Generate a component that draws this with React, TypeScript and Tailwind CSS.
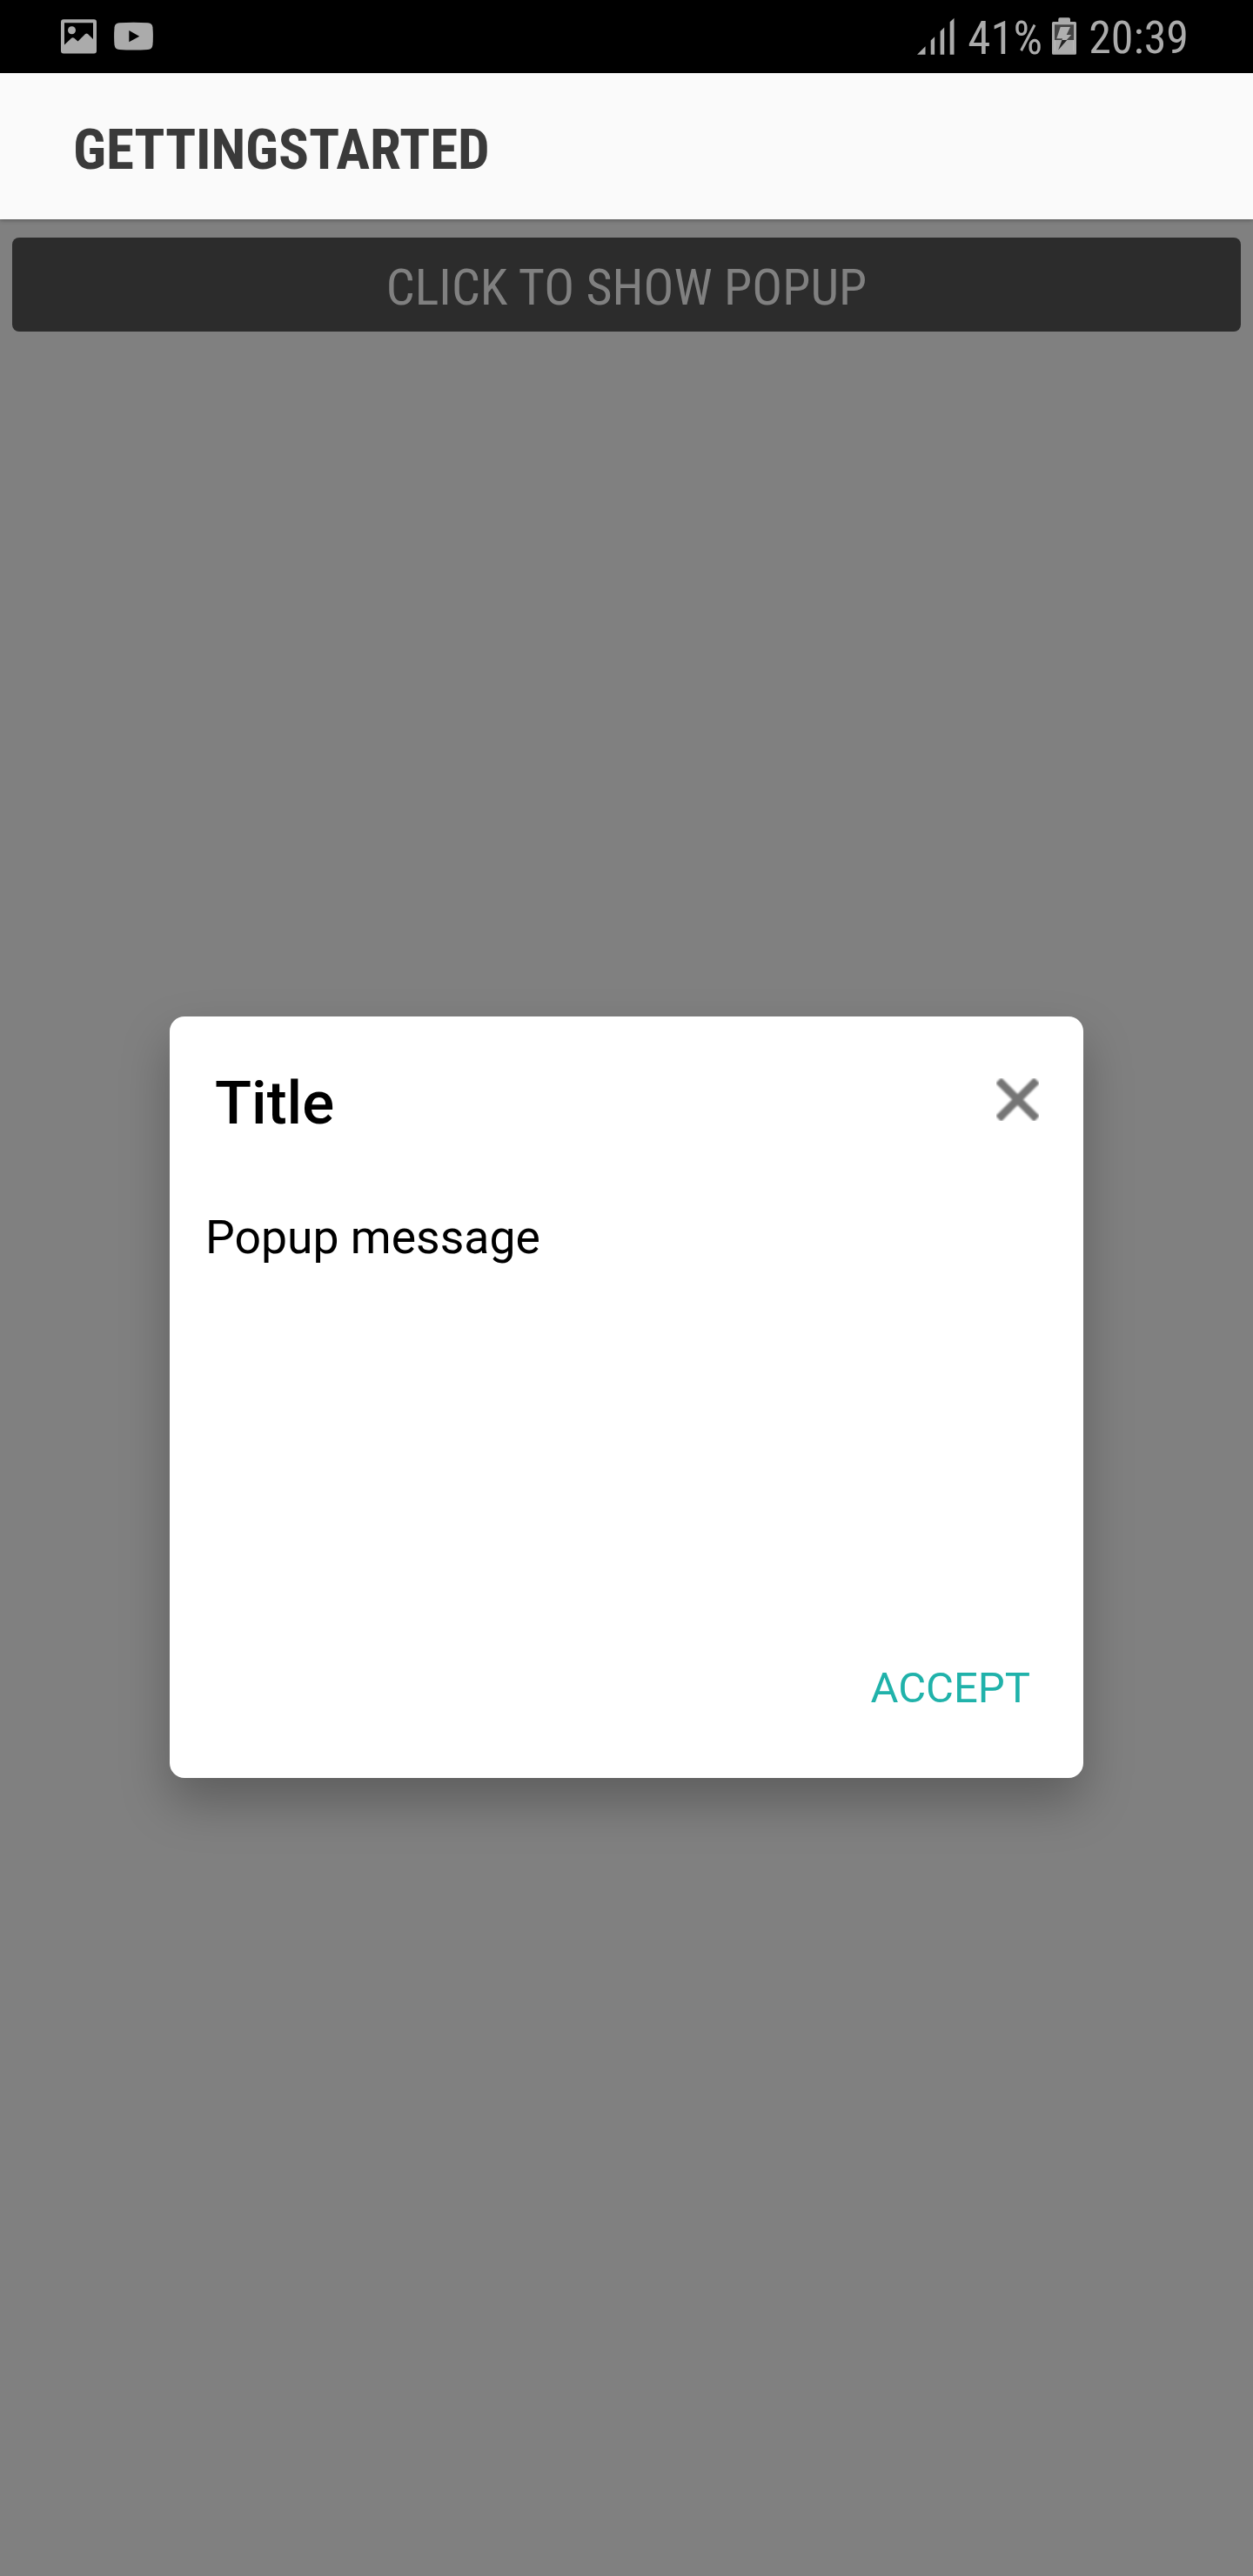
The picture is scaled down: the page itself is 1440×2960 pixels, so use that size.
function PictureIcon() {
  return (
    <svg className="h-10 w-[41px]" viewBox="70 22.5 41 40" fill="none">
      <rect x="70" y="22.7" width="41" height="39.3" rx="3" fill="#ababab" />
      <path d="M74 26.8H107V45.5L101.2 39.8Q99.5 38.2 97.8 39.8L89.5 48L85.2 44.3Q83.7 43.2 82.2 44.3L74 52Z" fill="#000" />
      <circle cx="82.5" cy="35.3" r="4.5" fill="#ababab" />
    </svg>
  );
}

function VideoIcon() {
  return (
    <svg className="ml-5 h-10 w-[45px]" viewBox="131 22.5 45 40">
      <path
        d="M137 26.8Q153.5 25.6 170 26.8Q175 27.2 175.5 32Q176.3 42 175.5 52Q175 57 170 57.5Q153.5 58.5 137 57.5Q132 57 131.5 52Q130.7 42 131.5 32Q132 27.2 137 26.8Z"
        fill="#ababab"
      />
      <path d="M148.3 35.6L160.2 42.2L148.3 48.8Z" fill="#000" />
    </svg>
  );
}

function SignalIcon() {
  return (
    <svg className="h-[44px] w-[43px]" viewBox="1053 20 43 44" fill="#ababab">
      <path d="M1053 62.7L1062.5 53.3V62.7Z" />
      <path d="M1068.7 62.7V46.5L1073.1 42.2V62.7Z" />
      <path d="M1079.6 62.7V36L1084.2 31.4V62.7Z" />
      <path d="M1090.7 62.7V25.3L1095.5 20.7V62.7Z" />
    </svg>
  );
}

function BatteryIcon() {
  return (
    <svg className="ml-[11.4px] h-[44px] w-7" viewBox="1209 20 28 44">
      <path
        d="M1216.3 25V22Q1216.3 20.3 1218 20.3H1228.2Q1230 20.3 1230 22V25H1235.5Q1237 25 1237 26.5V61.2Q1237 62.8 1235.5 62.8H1210.5Q1209 62.8 1209 61.2V26.5Q1209 25 1210.5 25Z"
        fill="#ababab"
      />
      <rect x="1212" y="28.3" width="22" height="17.7" fill="#444" />
      <path d="M1212.2 46V58.5M1233.8 46V58.5" stroke="#bdbdbd" strokeWidth="1" />
      <path d="M1218.7 31H1230L1225.7 40H1231.3L1225.6 46H1220.5L1221 44.3H1214.3Z" fill="#b0b0b0" />
      <path d="M1220.5 46H1226.3L1216.2 57.5Z" fill="#222" />
    </svg>
  );
}

function StatusBar() {
  return (
    <div className="flex h-[84px] items-center justify-between bg-black pr-[74px] pl-[70px] font-['Roboto_Condensed',Roboto,sans-serif] text-[#ababab]">
      <div className="flex items-center">
        <PictureIcon />
        <VideoIcon />
      </div>
      <div className="flex items-center">
        <SignalIcon />
        <span className="ml-[15.7px] pt-1 text-[53px] leading-[80px]">41%</span>
        <BatteryIcon />
        <span className="ml-[13.7px] pt-1 text-[52px] leading-[80px]">20:39</span>
      </div>
    </div>
  );
}

function Popup() {
  return (
    <section className="absolute top-[1168px] left-[195px] flex h-[875px] w-[1050px] flex-col rounded-[17px] bg-white shadow-[0_28px_56px_rgba(0,0,0,0.27)]">
      <header className="flex h-[191px] items-center justify-between pr-[51px] pl-[52px]">
        <h2 className="pt-2 text-[69px] leading-[80px] font-medium text-black">Title</h2>
        <button aria-label="Close" className="h-[49px] w-[49px]">
          <svg className="block h-full w-full overflow-hidden" viewBox="0 0 49 49">
            <path className="blur-[0.8px]" d="M2.500 2.500L46.500 46.500M46.500 2.500L2.500 46.500" stroke="#757575" strokeWidth="9" />
          </svg>
        </button>
      </header>
      <p className="flex-1 pt-[31px] pl-[41px] text-[53.5px] leading-[64px] text-black">Popup message</p>
      <footer className="flex h-[206px] items-center justify-end pr-[61px]">
        <button className="text-[49px] leading-[64px] text-[#20b2aa]">ACCEPT</button>
      </footer>
    </section>
  );
}

export default function App() {
  return (
    <div className="relative h-[2960px] w-[1440px] overflow-hidden bg-[#808080] font-[Roboto,sans-serif]">
      <StatusBar />
      <header className="relative flex h-[168px] items-center bg-[#fafafa] pt-[7px] pl-[84px] shadow-[0_1px_5px_rgba(0,0,0,0.35)]">
        <h1 className="font-['Roboto_Condensed',Roboto,sans-serif] text-[65px] leading-[80px] font-bold tracking-[-0.15px] text-[#3a3a3a]">
          GETTINGSTARTED
        </h1>
      </header>
      <main className="px-[14px] pt-[21px]">
        <button className="flex h-[108px] w-full items-center justify-center rounded-lg bg-[#2c2c2c] pt-[6px] font-['Roboto_Condensed',Roboto,sans-serif] text-[58px] leading-[80px] tracking-[0.05px] text-[#808080]">
          CLICK TO SHOW POPUP
        </button>
      </main>
      <Popup />
    </div>
  );
}
